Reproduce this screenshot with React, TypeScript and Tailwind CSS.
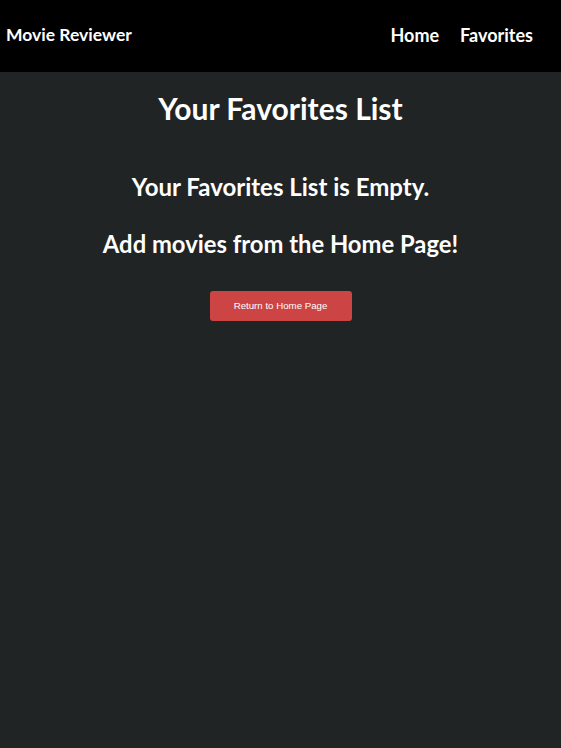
import React from "react";

export default function App() {
  const font = { fontFamily: "Lato, 'Noto Sans', sans-serif" };
  return (
    <div className="min-h-[748px] bg-[#212425] text-white" style={font}>
      <header className="h-[72px] bg-black flex items-center justify-between pl-[6px] pr-[28px] pb-[1px]">
        <span className="text-[17.5px] font-bold">Movie Reviewer</span>
        <nav className="flex gap-[21px] text-[18px] font-bold">
          <span>Home</span>
          <span>Favorites</span>
        </nav>
      </header>
      <main className="flex flex-col items-center">
        <h1 className="mt-[17px] text-[30px] font-bold leading-[38px]">Your Favorites List</h1>
        <h2 className="mt-[46px] text-[24px] font-bold leading-[28px]">Your Favorites List is Empty.</h2>
        <h2 className="mt-[29px] text-[23.8px] font-bold leading-[28px]">Add movies from the Home Page!</h2>
        <button
          className="mt-[33px] w-[142px] h-[30px] rounded-[3px] bg-[#cc4444] text-[9.7px] text-white"
          style={{ fontFamily: "'Liberation Sans', Arial, sans-serif" }}
        >
          Return to Home Page
        </button>
      </main>
    </div>
  );
}
